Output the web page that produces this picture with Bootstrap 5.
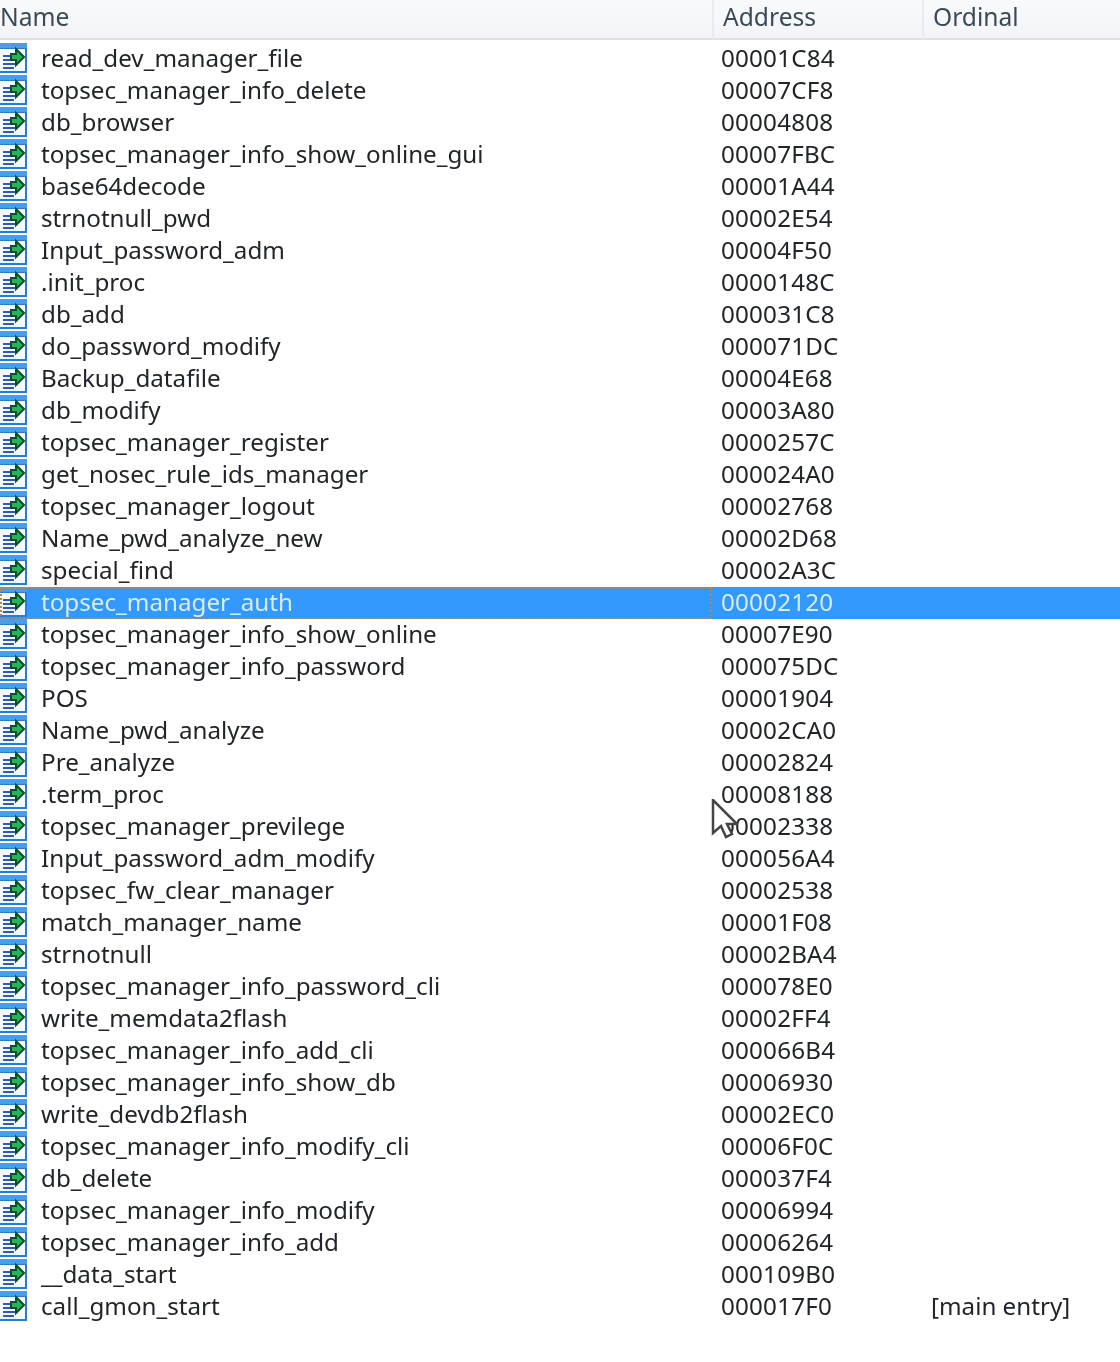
<!DOCTYPE html>
<html lang="en">
<head>
<meta charset="UTF-8">
<meta name="viewport" content="width=device-width, initial-scale=1.0">
<title>Exports</title>
<link href="https://cdn.jsdelivr.net/npm/bootstrap@5.3.0/dist/css/bootstrap.min.css" rel="stylesheet">
<style>
body { background: #fff; font-family: "Noto Sans", "Open Sans", sans-serif; font-size: 24.2px; color: #1a1a1a; overflow: hidden; }
.exports-wrap { position: relative; width: 1120px; height: 1362px; }
.exports { table-layout: fixed; width: 1120px; margin: 0; border-collapse: separate; border-spacing: 0; filter: blur(.45px); }
.exports th, .exports td { padding: 0; border: 0; background: transparent; white-space: nowrap; color: inherit; }
.exports thead th { height: 40px; padding-top: 1px; padding-bottom: 5px; font-weight: 400; color: #3c4a55; font-size: 24.6px; line-height: 32px; vertical-align: middle; background: linear-gradient(#f9fafc, #f2f4f8); border-bottom: 2px solid #e3dfdf; }
.exports thead th + th { border-left: 2px solid #e8ecf1; padding-left: 9px; }
.exports tbody td { height: 32px; line-height: 30px; padding-bottom: 2px; }
.exports tbody .head-pad { height: 3px; line-height: 3px; padding: 0; }
.name-cell { display: flex; align-items: center; gap: 12px; height: 30px; }
.exports .addr-cell { padding-left: 9px; letter-spacing: .2px; }
.exports .ord-cell { padding-left: 9px; }
.sel-row td { background: #3399ff; color: #d8ecff; }
.sel-row .name-wrap { outline: 2px dotted #b9824f; outline-offset: -2px; }
.doc-icon { flex: none; width: 29px; height: 30px; }
.cursor-mark { position: absolute; left: 711px; top: 799px; width: 27px; height: 40px; }
</style>
</head>
<body>
<svg width="0" height="0" class="position-absolute">
  <symbol id="exp" viewBox="0 0 29 30">
    <rect x="0" y="0" width="27" height="30" fill="#2a7ad8"/>
    <rect x="0" y="0" width="27" height="5" fill="#4a9cec"/>
    <rect x="0" y="6" width="25" height="22" fill="#f2f8ff"/>
    <path d="M3 13h9M3 17h9M3 21h12M3 25h11" stroke="#3358b8" stroke-width="2"/>
    <path d="M11 11h5V6l8 8-8 8v-5h-5z" fill="#24b558" stroke="#0f4f28" stroke-width="2"/>
  </symbol>
</svg>
<div class="exports-wrap">
<table class="table exports">
  <colgroup><col style="width:712px"><col style="width:210px"><col></colgroup>
  <thead><tr><th>Name</th><th>Address</th><th>Ordinal</th></tr></thead>
  <tbody>
    <tr><td class="head-pad" colspan="3"></td></tr>
    <tr><td class="name-wrap"><div class="name-cell"><svg class="doc-icon"><use href="#exp"/></svg>read_dev_manager_file</div></td><td class="addr-cell">00001C84</td><td class="ord-cell"></td></tr>
    <tr><td class="name-wrap"><div class="name-cell"><svg class="doc-icon"><use href="#exp"/></svg>topsec_manager_info_delete</div></td><td class="addr-cell">00007CF8</td><td class="ord-cell"></td></tr>
    <tr><td class="name-wrap"><div class="name-cell"><svg class="doc-icon"><use href="#exp"/></svg>db_browser</div></td><td class="addr-cell">00004808</td><td class="ord-cell"></td></tr>
    <tr><td class="name-wrap"><div class="name-cell"><svg class="doc-icon"><use href="#exp"/></svg>topsec_manager_info_show_online_gui</div></td><td class="addr-cell">00007FBC</td><td class="ord-cell"></td></tr>
    <tr><td class="name-wrap"><div class="name-cell"><svg class="doc-icon"><use href="#exp"/></svg>base64decode</div></td><td class="addr-cell">00001A44</td><td class="ord-cell"></td></tr>
    <tr><td class="name-wrap"><div class="name-cell"><svg class="doc-icon"><use href="#exp"/></svg>strnotnull_pwd</div></td><td class="addr-cell">00002E54</td><td class="ord-cell"></td></tr>
    <tr><td class="name-wrap"><div class="name-cell"><svg class="doc-icon"><use href="#exp"/></svg>Input_password_adm</div></td><td class="addr-cell">00004F50</td><td class="ord-cell"></td></tr>
    <tr><td class="name-wrap"><div class="name-cell"><svg class="doc-icon"><use href="#exp"/></svg>.init_proc</div></td><td class="addr-cell">0000148C</td><td class="ord-cell"></td></tr>
    <tr><td class="name-wrap"><div class="name-cell"><svg class="doc-icon"><use href="#exp"/></svg>db_add</div></td><td class="addr-cell">000031C8</td><td class="ord-cell"></td></tr>
    <tr><td class="name-wrap"><div class="name-cell"><svg class="doc-icon"><use href="#exp"/></svg>do_password_modify</div></td><td class="addr-cell">000071DC</td><td class="ord-cell"></td></tr>
    <tr><td class="name-wrap"><div class="name-cell"><svg class="doc-icon"><use href="#exp"/></svg>Backup_datafile</div></td><td class="addr-cell">00004E68</td><td class="ord-cell"></td></tr>
    <tr><td class="name-wrap"><div class="name-cell"><svg class="doc-icon"><use href="#exp"/></svg>db_modify</div></td><td class="addr-cell">00003A80</td><td class="ord-cell"></td></tr>
    <tr><td class="name-wrap"><div class="name-cell"><svg class="doc-icon"><use href="#exp"/></svg>topsec_manager_register</div></td><td class="addr-cell">0000257C</td><td class="ord-cell"></td></tr>
    <tr><td class="name-wrap"><div class="name-cell"><svg class="doc-icon"><use href="#exp"/></svg>get_nosec_rule_ids_manager</div></td><td class="addr-cell">000024A0</td><td class="ord-cell"></td></tr>
    <tr><td class="name-wrap"><div class="name-cell"><svg class="doc-icon"><use href="#exp"/></svg>topsec_manager_logout</div></td><td class="addr-cell">00002768</td><td class="ord-cell"></td></tr>
    <tr><td class="name-wrap"><div class="name-cell"><svg class="doc-icon"><use href="#exp"/></svg>Name_pwd_analyze_new</div></td><td class="addr-cell">00002D68</td><td class="ord-cell"></td></tr>
    <tr><td class="name-wrap"><div class="name-cell"><svg class="doc-icon"><use href="#exp"/></svg>special_find</div></td><td class="addr-cell">00002A3C</td><td class="ord-cell"></td></tr>
    <tr class="sel-row"><td class="name-wrap"><div class="name-cell"><svg class="doc-icon"><use href="#exp"/></svg>topsec_manager_auth</div></td><td class="addr-cell">00002120</td><td class="ord-cell"></td></tr>
    <tr><td class="name-wrap"><div class="name-cell"><svg class="doc-icon"><use href="#exp"/></svg>topsec_manager_info_show_online</div></td><td class="addr-cell">00007E90</td><td class="ord-cell"></td></tr>
    <tr><td class="name-wrap"><div class="name-cell"><svg class="doc-icon"><use href="#exp"/></svg>topsec_manager_info_password</div></td><td class="addr-cell">000075DC</td><td class="ord-cell"></td></tr>
    <tr><td class="name-wrap"><div class="name-cell"><svg class="doc-icon"><use href="#exp"/></svg>POS</div></td><td class="addr-cell">00001904</td><td class="ord-cell"></td></tr>
    <tr><td class="name-wrap"><div class="name-cell"><svg class="doc-icon"><use href="#exp"/></svg>Name_pwd_analyze</div></td><td class="addr-cell">00002CA0</td><td class="ord-cell"></td></tr>
    <tr><td class="name-wrap"><div class="name-cell"><svg class="doc-icon"><use href="#exp"/></svg>Pre_analyze</div></td><td class="addr-cell">00002824</td><td class="ord-cell"></td></tr>
    <tr><td class="name-wrap"><div class="name-cell"><svg class="doc-icon"><use href="#exp"/></svg>.term_proc</div></td><td class="addr-cell">00008188</td><td class="ord-cell"></td></tr>
    <tr><td class="name-wrap"><div class="name-cell"><svg class="doc-icon"><use href="#exp"/></svg>topsec_manager_previlege</div></td><td class="addr-cell">00002338</td><td class="ord-cell"></td></tr>
    <tr><td class="name-wrap"><div class="name-cell"><svg class="doc-icon"><use href="#exp"/></svg>Input_password_adm_modify</div></td><td class="addr-cell">000056A4</td><td class="ord-cell"></td></tr>
    <tr><td class="name-wrap"><div class="name-cell"><svg class="doc-icon"><use href="#exp"/></svg>topsec_fw_clear_manager</div></td><td class="addr-cell">00002538</td><td class="ord-cell"></td></tr>
    <tr><td class="name-wrap"><div class="name-cell"><svg class="doc-icon"><use href="#exp"/></svg>match_manager_name</div></td><td class="addr-cell">00001F08</td><td class="ord-cell"></td></tr>
    <tr><td class="name-wrap"><div class="name-cell"><svg class="doc-icon"><use href="#exp"/></svg>strnotnull</div></td><td class="addr-cell">00002BA4</td><td class="ord-cell"></td></tr>
    <tr><td class="name-wrap"><div class="name-cell"><svg class="doc-icon"><use href="#exp"/></svg>topsec_manager_info_password_cli</div></td><td class="addr-cell">000078E0</td><td class="ord-cell"></td></tr>
    <tr><td class="name-wrap"><div class="name-cell"><svg class="doc-icon"><use href="#exp"/></svg>write_memdata2flash</div></td><td class="addr-cell">00002FF4</td><td class="ord-cell"></td></tr>
    <tr><td class="name-wrap"><div class="name-cell"><svg class="doc-icon"><use href="#exp"/></svg>topsec_manager_info_add_cli</div></td><td class="addr-cell">000066B4</td><td class="ord-cell"></td></tr>
    <tr><td class="name-wrap"><div class="name-cell"><svg class="doc-icon"><use href="#exp"/></svg>topsec_manager_info_show_db</div></td><td class="addr-cell">00006930</td><td class="ord-cell"></td></tr>
    <tr><td class="name-wrap"><div class="name-cell"><svg class="doc-icon"><use href="#exp"/></svg>write_devdb2flash</div></td><td class="addr-cell">00002EC0</td><td class="ord-cell"></td></tr>
    <tr><td class="name-wrap"><div class="name-cell"><svg class="doc-icon"><use href="#exp"/></svg>topsec_manager_info_modify_cli</div></td><td class="addr-cell">00006F0C</td><td class="ord-cell"></td></tr>
    <tr><td class="name-wrap"><div class="name-cell"><svg class="doc-icon"><use href="#exp"/></svg>db_delete</div></td><td class="addr-cell">000037F4</td><td class="ord-cell"></td></tr>
    <tr><td class="name-wrap"><div class="name-cell"><svg class="doc-icon"><use href="#exp"/></svg>topsec_manager_info_modify</div></td><td class="addr-cell">00006994</td><td class="ord-cell"></td></tr>
    <tr><td class="name-wrap"><div class="name-cell"><svg class="doc-icon"><use href="#exp"/></svg>topsec_manager_info_add</div></td><td class="addr-cell">00006264</td><td class="ord-cell"></td></tr>
    <tr><td class="name-wrap"><div class="name-cell"><svg class="doc-icon"><use href="#exp"/></svg>__data_start</div></td><td class="addr-cell">000109B0</td><td class="ord-cell"></td></tr>
    <tr><td class="name-wrap"><div class="name-cell"><svg class="doc-icon"><use href="#exp"/></svg>call_gmon_start</div></td><td class="addr-cell">000017F0</td><td class="ord-cell">[main entry]</td></tr>
  </tbody>
</table>
<svg class="cursor-mark" viewBox="0 0 27 40">
  <path d="M2 1v33l8-7 5 11 6-3-5-10h10z" fill="#fff" stroke="#444" stroke-width="2.5"/>
</svg>
</div>
<script src="https://cdn.jsdelivr.net/npm/bootstrap@5.3.0/dist/js/bootstrap.bundle.min.js"></script>
</body>
</html>
